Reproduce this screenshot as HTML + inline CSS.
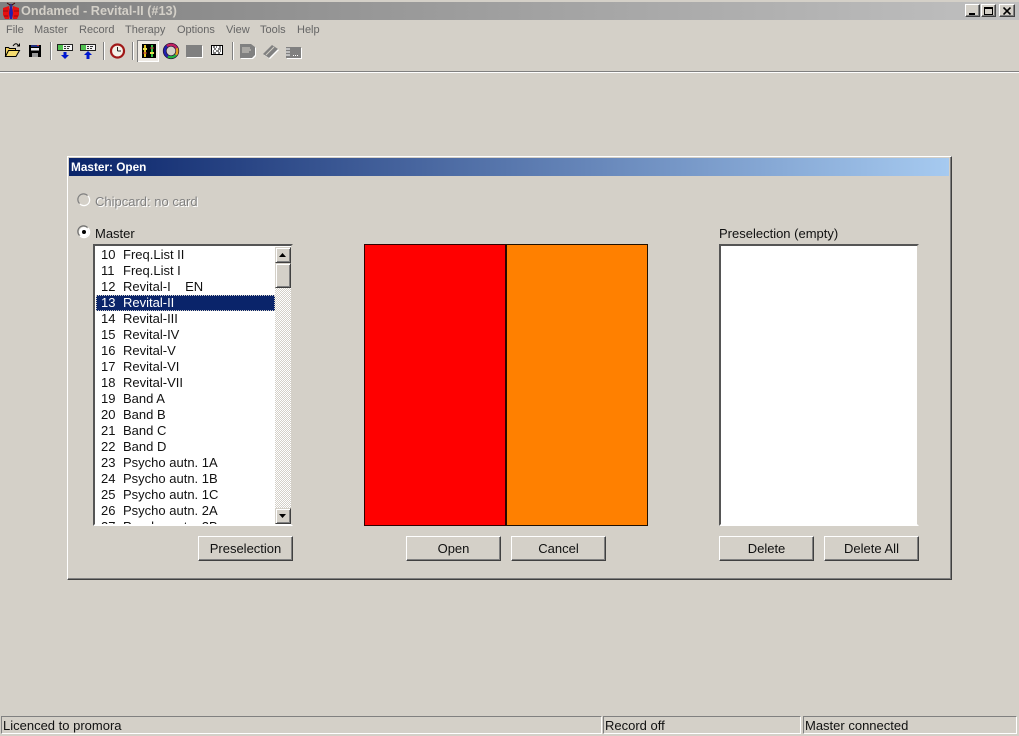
<!DOCTYPE html>
<html><head><meta charset="utf-8"><title>Ondamed</title>
<style>
html,body{margin:0;padding:0;overflow:hidden;width:1019px;height:736px}
body{background:#d4d0c8;position:relative;font:13px/16px "Liberation Sans",sans-serif;color:#000}
.a{position:absolute;white-space:pre}
.m{position:absolute;top:22px;font-size:11px;line-height:16px;color:#666}
.btn{position:absolute;top:536px;height:25px;box-sizing:border-box;background:#d4d0c8;border:1px solid;border-color:#fff #404040 #404040 #fff;box-shadow:inset -1px -1px 0 #808080;text-align:center;line-height:23px;font-size:13px;color:#111}
.sb{position:absolute;box-sizing:border-box;width:16px;background:#d4d0c8;border:1px solid;border-color:#d4d0c8 #404040 #404040 #d4d0c8;box-shadow:inset 1px 1px 0 #fff,inset -1px -1px 0 #808080}
.st{position:absolute;top:716px;height:18px;box-sizing:border-box;border:1px solid;border-color:#808080 #fff #fff #808080;padding-left:1px;line-height:17px;font-size:13px;color:#111;white-space:pre}
.list{position:absolute;left:1px;top:1px;width:179px;height:277px;overflow:hidden;white-space:normal}
.row{height:16px;line-height:16px;padding-left:5px;white-space:pre;color:#111;position:relative}
.row b{font-weight:normal;display:inline-block;width:22px}
.wb{position:absolute;top:4px;width:15px;height:13px;box-sizing:border-box;background:#d4d0c8;border:1px solid;border-color:#fff #404040 #404040 #fff;box-shadow:inset -1px -1px 0 #808080}
</style></head><body>

<!-- title bar -->
<div class="a" style="left:0;top:2px;width:1019px;height:18px;background:linear-gradient(90deg,#808080,#c0c0c0)"></div>
<svg class="a" style="left:2px;top:2px" width="18" height="18" viewBox="0 0 18 18">
<path d="M1 6 L7 4 L8 11 L7 17 L3 17 L1 13 Z" fill="#e81010"/><path d="M17 6 L11 4 L10 11 L11 17 L15 17 L17 13 Z" fill="#e81010"/>
<path d="M8 5 h2 l1 6 -1 6 h-2 l-1 -6z" fill="#2020b0"/>
<circle cx="9" cy="3.500" r="1.600" fill="#303080"/><path d="M5 1 L8 3 M13 1 L10 3" stroke="#400" fill="none"/><path d="M1 9h5M12 9h5M2 14h4M12 14h4" stroke="#701010" stroke-width=".7"/>
</svg>
<div class="a" style="left:21px;top:3px;font-weight:bold;font-size:12.700px;color:#d4d0c8">Ondamed - Revital-II (#13)</div>
<div class="wb" style="left:965px"><div class="a" style="left:3px;top:8px;width:6px;height:2px;background:#000"></div></div>
<div class="wb" style="left:981px"><div class="a" style="left:2px;top:2px;width:9px;height:8px;box-sizing:border-box;border:1px solid #000;border-top-width:2px"></div></div>
<div class="wb" style="left:999px;width:16px"><svg class="a" style="left:3px;top:2px" width="9" height="8"><path d="M0.500 0.500 L7.500 7.500 M7.500 0.500 L0.500 7.500" stroke="#000" stroke-width="1.600"/></svg></div>

<!-- menu -->
<div class="m" style="left:6px">File</div>
<div class="m" style="left:34px">Master</div>
<div class="m" style="left:79px">Record</div>
<div class="m" style="left:125px">Therapy</div>
<div class="m" style="left:177px">Options</div>
<div class="m" style="left:226px">View</div>
<div class="m" style="left:260px">Tools</div>
<div class="m" style="left:297px">Help</div>

<!-- toolbar -->
<svg class="a" style="left:0;top:38px" width="320" height="26" viewBox="0 0 320 26">
<!-- open -->
<path d="M5.500 18.500 V9.500 h3 l1 1 h6 v2" fill="#f0d060" stroke="#000"/>
<path d="M5.500 18.500 L8.500 12.500 H19.500 L16 18.500 Z" fill="#f5dc70" stroke="#000"/>
<path d="M13 8 Q15 5 17 6 L19.500 8 M19.500 5.500 V8 H17" fill="none" stroke="#000"/>
<!-- save -->
<rect x="29" y="7" width="12" height="12" fill="#000"/><rect x="31" y="7" width="8" height="2" fill="#203080"/><rect x="37" y="7" width="2" height="1" fill="#c03030"/>
<rect x="31" y="10" width="8" height="2.500" fill="#eee"/><rect x="32" y="15" width="6" height="4" fill="#999"/>
<!-- separators -->
<path d="M50.500 4V22M103.500 4V22M132.500 4V22M232.500 4V22" stroke="#808080"/>
<path d="M51.500 4V22M104.500 4V22M133.500 4V22M233.500 4V22" stroke="#fff"/>
<!-- rec down/up -->
<rect x="57.500" y="6.500" width="15" height="6" fill="#f4f4f4" stroke="#222"/><rect x="58" y="7" width="5" height="5" fill="#50c050"/><path d="M64 8.500h2M67 8.500h3M64 10.500h2M67 10.500h2" stroke="#333"/>
<path d="M63.500 14h3v3h2.500l-4 4 -4 -4h2.500z" fill="#0018d0"/>
<rect x="80.500" y="6.500" width="15" height="6" fill="#f4f4f4" stroke="#222"/><rect x="81" y="7" width="5" height="5" fill="#50c050"/><path d="M87 8.500h2M90 8.500h3M87 10.500h2M90 10.500h2" stroke="#333"/>
<path d="M86.500 21v-4h-2.500l4-4 4 4h-2.500v4z" fill="#0018d0"/>
<!-- clock -->
<circle cx="117.500" cy="13" r="6.500" fill="#f4f0e8" stroke="#a01818" stroke-width="2.200"/><path d="M117.500 13V9M117.500 13h3.500" stroke="#222"/>
<!-- active -->
<rect x="137" y="2" width="22" height="22" fill="#eeeae4"/><path d="M137.500 24V2.500H159" stroke="#808080" fill="none"/><path d="M158.500 3V23.500H138" stroke="#fff" fill="none"/>
<rect x="142" y="6" width="14" height="14" fill="#000"/>
<path d="M145 7V19" stroke="#e0c020" stroke-width="2"/><path d="M152 7V19" stroke="#30c040" stroke-width="2"/><path d="M143 11h4M150 15h4" stroke="#e8e050" stroke-width="2"/><path d="M143 15h4M150 10h4" stroke="#c03030"/>
<!-- ring -->
<g fill="none" stroke-width="3" transform="rotate(-90 171 13)">
<circle cx="171" cy="13" r="6.300" stroke="#c02060"/>
<circle cx="171" cy="13" r="6.300" stroke="#e0a020" stroke-dasharray="0 7 7 40"/>
<circle cx="171" cy="13" r="6.300" stroke="#20b040" stroke-dasharray="0 14 9 40"/>
<circle cx="171" cy="13" r="6.300" stroke="#2020b0" stroke-dasharray="0 23 12 40"/>
</g>
<circle cx="171" cy="13" r="7.800" fill="none" stroke="#201030" stroke-width=".7"/><circle cx="171" cy="13" r="4.800" fill="none" stroke="#201030" stroke-width=".7"/>
<!-- disabled block -->
<rect x="187" y="8" width="16" height="12" fill="#fff"/><rect x="186" y="7" width="16" height="12" fill="#808080"/>
<!-- checker -->
<rect x="211.500" y="7.500" width="11" height="9" fill="#fff" stroke="#000"/><path d="M213 9h2M216 9h1M219 9h2M214 11h2M218 11h3M213 13h1M216 13h3M220 13h1M213 15h3M218 15h2" stroke="#000"/>
<!-- disabled notes -->
<path d="M241 7h11l4 3v8l-3 3h-12z" fill="#fff"/><path d="M240 6h11l4 3v8l-3 3h-12z" fill="#808080"/><path d="M242 10h8M242 12h9M242 14h7M241 6v-1M244 6v-1M247 6v-1M250 6v-1" stroke="#d4d0c8"/>
<path d="M264 17 L273 8 L279 12 L270 21 Z" fill="#fff"/><path d="M263 16 L272 7 L278 11 L269 20 Z" fill="#808080"/><path d="M266 17 L274 9" stroke="#d4d0c8"/>
<path d="M287 10h15v11h-15z" fill="#fff"/><path d="M286 9h15v11h-15z" fill="#808080"/><path d="M286 11h4M286 14h4M286 17h4" stroke="#fff"/><path d="M293 17.500h1M295 17.500h1M297 17.500h1" stroke="#fff"/>
</svg>
<div class="a" style="left:0;top:71px;width:1019px;height:1px;background:#808080"></div>
<div class="a" style="left:0;top:72px;width:1019px;height:1px;background:#fff"></div>

<!-- dialog -->
<div class="a" style="left:67px;top:156px;width:885px;height:424px;box-sizing:border-box;border:1px solid;border-color:#fff #404040 #404040 #fff;box-shadow:inset -1px -1px 0 #808080"></div>
<div class="a" style="left:69px;top:158px;width:880px;height:18px;background:linear-gradient(90deg,#0a246a,#a6caf0)"></div>
<div class="a" style="left:71px;top:159px;font-weight:bold;font-size:11.800px;color:#fff">Master: Open</div>

<!-- radios -->
<svg class="a" style="left:77px;top:193px" width="14" height="14"><path d="M10.500 2.500A5 5 0 0 0 2.500 10.500" fill="none" stroke="#808080" stroke-width="1.200"/><path d="M3 11A5.500 5.500 0 0 0 11 3" fill="none" stroke="#fff" stroke-width="1.200"/></svg>
<div class="a" style="left:95px;top:194px;color:#808080;text-shadow:1px 1px 0 #fff">Chipcard: no card</div>
<svg class="a" style="left:77px;top:225px" width="14" height="14"><circle cx="7" cy="7" r="5" fill="#fff"/><path d="M10.500 2.500A5 5 0 0 0 2.500 10.500" fill="none" stroke="#707070" stroke-width="1.200"/><path d="M3 11A5.500 5.500 0 0 0 11 3" fill="none" stroke="#fff" stroke-width="1.200"/><circle cx="7" cy="7" r="2" fill="#000"/></svg>
<div class="a" style="left:95px;top:226px;color:#111">Master</div>
<div class="a" style="left:719px;top:226px;color:#111">Preselection (empty)</div>

<!-- list -->
<div class="a" style="left:93px;top:244px;width:200px;height:282px;box-sizing:border-box;border:2px solid;border-color:#555 #d4d0c8 #fff #555;background:#fff;overflow:hidden">
<div class="list"><div class="row"><b>10</b>Freq.List II</div><div class="row"><b>11</b>Freq.List I</div><div class="row"><b>12</b>Revital-I    EN</div><div class="row" style="background:#0a246a;color:#fff;outline:1px dotted #d4d0c8;outline-offset:-1px"><b>13</b>Revital-II</div><div class="row"><b>14</b>Revital-III</div><div class="row"><b>15</b>Revital-IV</div><div class="row"><b>16</b>Revital-V</div><div class="row"><b>17</b>Revital-VI</div><div class="row"><b>18</b>Revital-VII</div><div class="row"><b>19</b>Band A</div><div class="row"><b>20</b>Band B</div><div class="row"><b>21</b>Band C</div><div class="row"><b>22</b>Band D</div><div class="row"><b>23</b>Psycho autn. 1A</div><div class="row"><b>24</b>Psycho autn. 1B</div><div class="row"><b>25</b>Psycho autn. 1C</div><div class="row"><b>26</b>Psycho autn. 2A</div><div class="row"><b>27</b>Psycho autn. 2B</div></div>
</div>
<div class="a" style="left:275px;top:247px;width:16px;height:277px;background:repeating-conic-gradient(#d4d0c8 0 25%,#fff 0 50%) 0 0/2px 2px"></div>
<div class="sb" style="left:275px;top:247px;height:16px"><svg class="a" style="left:2px;top:3px" width="10" height="8"><path d="M1 6h7L4.500 2z" fill="#000"/></svg></div>
<div class="sb" style="left:275px;top:263px;height:25px"></div>
<div class="sb" style="left:275px;top:508px;height:16px"><svg class="a" style="left:2px;top:3px" width="10" height="8"><path d="M1 2h7L4.500 6z" fill="#000"/></svg></div>

<!-- colour boxes -->
<div class="a" style="left:364px;top:244px;width:142px;height:282px;box-sizing:border-box;background:#ff0000;border:1px solid #300000"></div>
<div class="a" style="left:506px;top:244px;width:142px;height:282px;box-sizing:border-box;background:#ff8000;border:1px solid #201000"></div>

<!-- preselection -->
<div class="a" style="left:719px;top:244px;width:200px;height:282px;box-sizing:border-box;border:2px solid;border-color:#555 #d4d0c8 #fff #555;background:#fff"></div>

<!-- buttons -->
<div class="btn" style="left:198px;width:95px">Preselection</div>
<div class="btn" style="left:406px;width:95px">Open</div>
<div class="btn" style="left:511px;width:95px">Cancel</div>
<div class="btn" style="left:719px;width:95px">Delete</div>
<div class="btn" style="left:824px;width:95px">Delete All</div>

<!-- status -->
<div class="st" style="left:1px;width:601px">Licenced to promora</div>
<div class="st" style="left:603px;width:198px">Record off</div>
<div class="st" style="left:803px;width:214px">Master connected</div>
</body></html>
